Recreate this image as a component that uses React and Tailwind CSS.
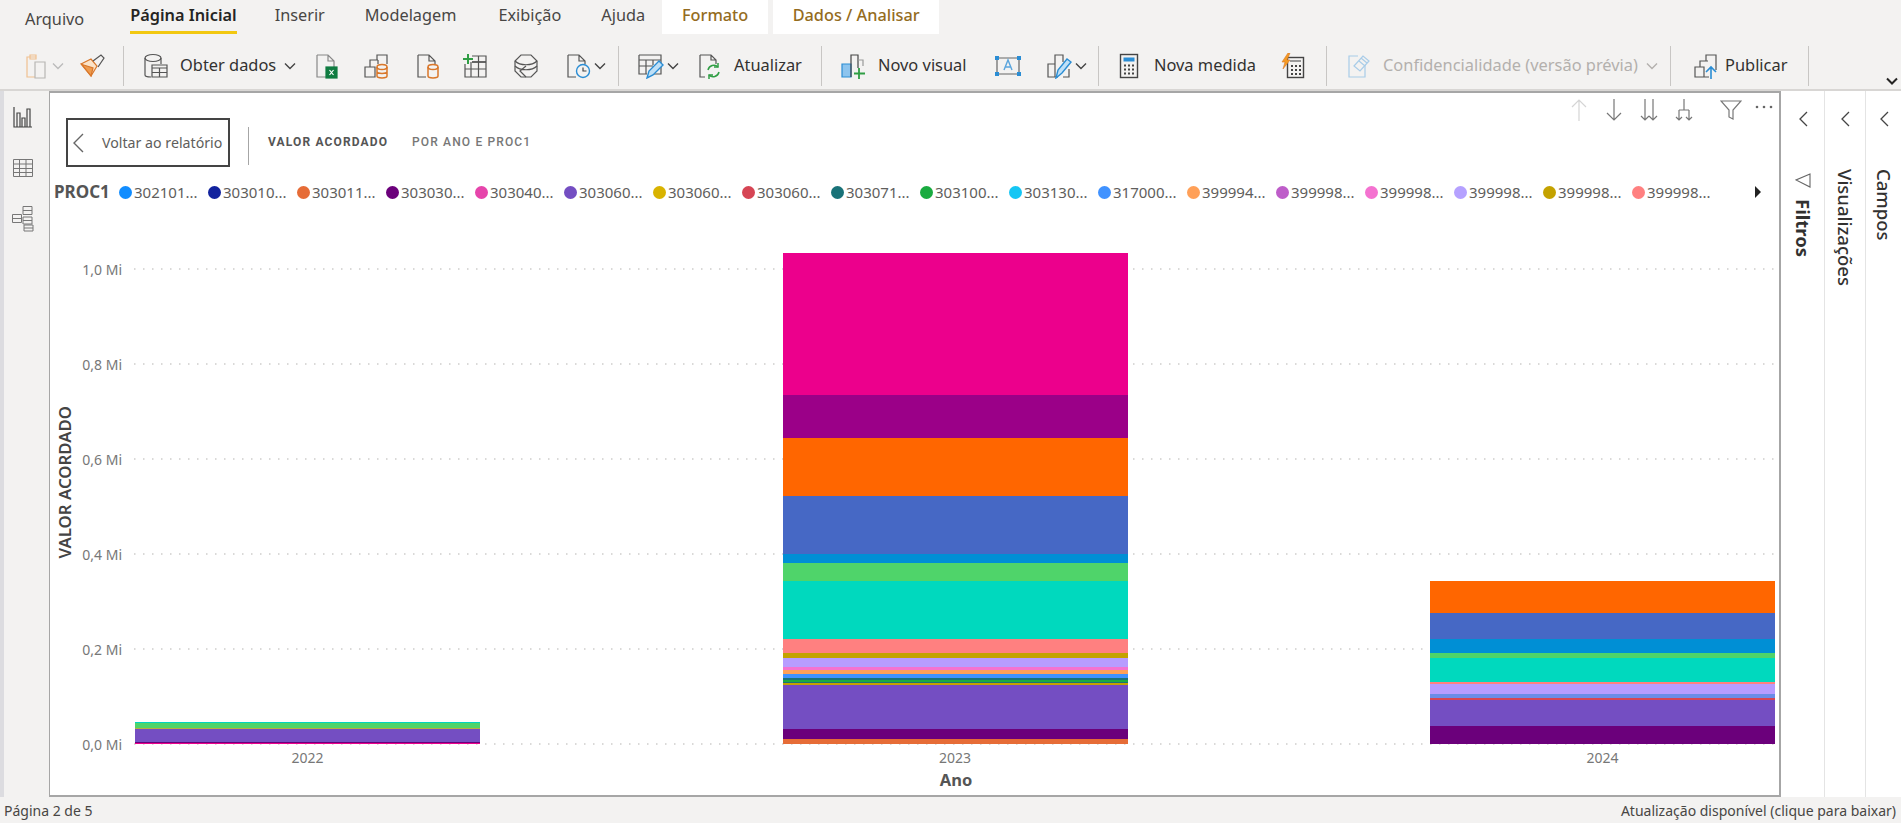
import React from 'react';

const tabs = [
  { label: 'Página Inicial', ml: 'ml-[46px]', cls: 'font-semibold text-[#252423]' },
  { label: 'Inserir', ml: 'ml-[38px]', cls: 'text-[#484644]' },
  { label: 'Modelagem', ml: 'ml-[40px]', cls: 'text-[#484644]' },
  { label: 'Exibição', ml: 'ml-[42px]', cls: 'text-[#484644]' },
  { label: 'Ajuda', ml: 'ml-[40px]', cls: 'text-[#484644]' },
];

const legend = [
  ['#118DFF', '302101...'], ['#12239E', '303010...'], ['#E66C37', '303011...'],
  ['#6B007B', '303030...'], ['#E645AB', '303040...'], ['#744EC2', '303060...'],
  ['#D9B300', '303060...'], ['#D64554', '303060...'], ['#197278', '303071...'],
  ['#1AAB40', '303100...'], ['#15C6F4', '303130...'], ['#4092FF', '317000...'],
  ['#FFA058', '399994...'], ['#BE5DC9', '399998...'], ['#F472D0', '399998...'],
  ['#B5A1FF', '399998...'], ['#C4A200', '399998...'], ['#FF8080', '399998...'],
];

// heights in px, top of the stack first
const bars = [
  {
    year: '2022',
    height: 22,
    parts: [[1, '#00D4C0'], [5, '#4FD46A'], [1, '#B5B040'], [13, '#744EC2'], [1, '#6B007B'], [1, '#EC008C']],
  },
  {
    year: '2023',
    height: 491,
    parts: [
      [142, '#EC008C'], [43, '#9B0088'], [58, '#FF6600'], [58, '#4668C5'], [9, '#008FD5'], [18, '#4FD46A'],
      [58, '#00D9BE'], [14, '#FF8080'], [5, '#C4A200'], [9, '#B79CFF'], [3, '#F472D0'], [4, '#FFA058'],
      [4, '#4092FF'], [2, '#197278'], [2, '#1AAB40'], [1, '#197278'], [2, '#C4A200'], [44, '#744EC2'],
      [10, '#6B007B'], [5, '#E66C37'],
    ],
  },
  {
    year: '2024',
    height: 163,
    parts: [
      [32, '#FF6600'], [26, '#4668C5'], [14, '#008FD5'], [5, '#4FD46A'], [24, '#00D9BE'], [2, '#FF8080'],
      [10, '#B79CFF'], [4, '#6B8CE8'], [2, '#D64554'], [26, '#744EC2'], [18, '#6B007B'],
    ],
  },
];

const yTicks = ['1,0 Mi', '0,8 Mi', '0,6 Mi', '0,4 Mi', '0,2 Mi', '0,0 Mi'];

const Chevron = ({ color = '#444' }) => (
  <svg width="12" height="8" viewBox="0 0 12 8" fill="none" stroke={color} strokeWidth="1.4">
    <path d="M1 1.5 6 6.5 11 1.5" />
  </svg>
);

const Icon = ({ children }) => (
  <svg width="26" height="26" viewBox="0 0 26 26" fill="none" stroke="#555" strokeWidth="1.2">
    {children}
  </svg>
);

const Sep = ({ ml }) => <div className={`h-[40px] w-px bg-[#c8c6c4] ${ml}`} />;

export default function App() {
  return (
    <div className="relative flex h-[823px] w-[1901px] flex-col overflow-hidden bg-[#f3f2f1] font-['Noto_Sans','Open_Sans',sans-serif]">
      <div className="flex h-[34px] shrink-0 items-stretch text-[16.3px] leading-none">
        <span className="ml-[25px] mt-[11px] text-[#484644]">Arquivo</span>
        {tabs.map((t) => (
          <div key={t.label} className={`${t.ml} ${t.cls} relative pt-[7px]`}>
            {t.label}
            {t.label === 'Página Inicial' && (
              <div className="absolute bottom-0 left-0 right-0 h-[3px] bg-[#f2c811]" />
            )}
          </div>
        ))}
        <div className="ml-[17px] flex w-[106px] justify-center bg-white pt-[7px] font-medium text-[#946c1e]">Formato</div>
        <div className="ml-[5px] flex w-[166px] justify-center bg-white pt-[7px] font-medium text-[#946c1e]">Dados / Analisar</div>
      </div>

      <div className="relative flex h-[57px] shrink-0 items-center border-b-2 border-[#d8d6d4] pt-[8px] text-[16.4px] text-[#323130]">
        {/* paste */}
        <div className="ml-[25px]">
          <Icon>
            <path d="M11 4H2v20h8" stroke="#f0c090" />
            <path d="M5 6V2h6v4z" stroke="#f0c090" />
            <path d="M10 9h10v16H10z" fill="#f3f2f1" stroke="#b8b6b4" />
          </Icon>
        </div>
        <div className="ml-[1px]"><Chevron color="#bbb" /></div>
        {/* format brush */}
        <div className="ml-[15px]">
          <Icon>
            <path d="M2 11 12 6l6 7-6 10z" fill="#fbe3c8" stroke="#d9772a" />
            <path d="M3 11.500 14 15 12 23z" fill="#ee9b4e" stroke="#d9772a" />
            <path d="M14 8l8-6 3 3-6 9" stroke="#555" />
          </Icon>
        </div>
        <Sep ml="ml-[18px]" />
        {/* get data */}
        <div className="ml-[19px]">
          <Icon>
            <ellipse cx="10" cy="5" rx="8" ry="3.500" />
            <path d="M2 5v17c0 1 2 2 6 2M18 5v6" />
            <path d="M9 12h15v12H9zM9 12h15v3H9z" />
            <path d="M9 19.500h15M16.500 15v9" />
          </Icon>
        </div>
        <span className="ml-[11px] w-[97px] whitespace-nowrap">Obter dados</span>
        <div className="ml-[7px]"><Chevron /></div>
        {/* excel */}
        <div className="ml-[18px]">
          <Icon>
            <path d="M3 2h11l6 6v6M14 2v6h6M3 2v22h9" stroke="#888" />
            <rect x="12" y="14" width="11" height="11" fill="#107c41" stroke="#107c41" />
            <path d="M15.500 17l4 5M19.500 17l-4 5" stroke="#fff" />
          </Icon>
        </div>
        {/* dataset */}
        <div className="ml-[24px]">
          <Icon>
            <path d="M1 14h10v10H1zM6 14V7h8M14 7v4M13 7V2h10v9" />
            <ellipse cx="18" cy="14" rx="5" ry="2.500" stroke="#d9772a" strokeWidth="1.500" />
            <path d="M13 14v9c0 2.500 10 2.500 10 0v-9M13 18.500c0 2.500 10 2.500 10 0" stroke="#d9772a" strokeWidth="1.500" />
          </Icon>
        </div>
        {/* sql */}
        <div className="ml-[25px]">
          <Icon>
            <path d="M3 2h11l6 6v3M14 2v6h6M3 2v22h8" />
            <ellipse cx="18" cy="14" rx="5" ry="2.500" stroke="#d9772a" strokeWidth="1.500" />
            <path d="M13 14v9c0 2.500 10 2.500 10 0v-9" stroke="#d9772a" strokeWidth="1.500" />
          </Icon>
        </div>
        {/* enter data */}
        <div className="ml-[21px]">
          <Icon>
            <path d="M10 3h14v21H3V11M3 16h21M9 9v15M16.500 3v21" />
            <path d="M10 9h14" strokeWidth="1.800" />
            <path d="M6 1v10M1 6h10" stroke="#2f9e44" strokeWidth="2" />
          </Icon>
        </div>
        {/* dataverse */}
        <div className="ml-[25px]">
          <Icon>
            <path d="M8 2h10l6 6v10l-6 6H8l-6-6V8z" />
            <path d="M2 8c5 5 17 5 22 0M2 13c5 5 17 5 22 0M13 13l-6 5 6 6" />
          </Icon>
        </div>
        {/* recent */}
        <div className="ml-[26px]">
          <Icon>
            <path d="M3 2h11l6 6v3M14 2v6h6M3 2v22h8" />
            <circle cx="18" cy="18" r="6.500" stroke="#2a8dd4" strokeWidth="1.400" fill="#f3f2f1" />
            <path d="M18 14.500V18h3.500" stroke="#444" />
          </Icon>
        </div>
        <div className="ml-[3px]"><Chevron /></div>
        <Sep ml="ml-[12px]" />
        {/* transform */}
        <div className="ml-[19px]">
          <Icon>
            <path d="M1 2h22v19H12M1 2v19h8M1 2v5h22M1 13h14M8 7v14M15 7v5" />
            <path d="M9 25l2-7 10-10 4 4-10 10z" stroke="#2a8dd4" fill="#bfe0f7" strokeWidth="1.400" />
          </Icon>
        </div>
        <div className="ml-[3px]"><Chevron /></div>
        {/* refresh */}
        <div className="ml-[17px]">
          <Icon>
            <path d="M4 2h11l5 5v4M15 2v5h5M4 2v22h5" />
            <path d="M12 17a6 6 0 0 1 10-3M23 19a6 6 0 0 1-10 3" stroke="#2f9e44" strokeWidth="1.500" />
            <path d="M22 10v4h-4M13 26v-4h4" stroke="#2f9e44" strokeWidth="1.500" />
          </Icon>
        </div>
        <span className="ml-[12px] w-[67px] whitespace-nowrap">Atualizar</span>
        <Sep ml="ml-[20px]" />
        {/* new visual */}
        <div className="ml-[19px]">
          <Icon>
            <path d="M1 11h9v13H1z" fill="#8cc4ee" stroke="#2a8dd4" />
            <path d="M10 24V2h7v13" stroke="#444" />
            <path d="M17 7h5v6" stroke="#999" />
            <path d="M18 15v11M13 20.500h11" stroke="#2f9e44" strokeWidth="1.800" />
          </Icon>
        </div>
        <span className="ml-[11px] w-[89px] whitespace-nowrap">Novo visual</span>
        {/* text box */}
        <div className="ml-[28px]">
          <Icon>
            <path d="M2 5h22v16H2z" stroke="#666" />
            <rect x="0" y="3" width="4" height="4" fill="#2a8dd4" stroke="none" />
            <rect x="22" y="3" width="4" height="4" fill="#2a8dd4" stroke="none" />
            <rect x="0" y="19" width="4" height="4" fill="#2a8dd4" stroke="none" />
            <rect x="22" y="19" width="4" height="4" fill="#2a8dd4" stroke="none" />
            <path d="M9 17l4-10 4 10M10.500 14h5" stroke="#5aa5dd" strokeWidth="1.400" />
          </Icon>
        </div>
        {/* more visuals */}
        <div className="ml-[25px]">
          <Icon>
            <path d="M2 11h7v13H2zM9 11V2h8v7M17 24h6v-8M9 24h3" />
            <path d="M10 25l2-8 9-11 4 3-9 11z" stroke="#2a8dd4" fill="#bfe0f7" strokeWidth="1.400" />
          </Icon>
        </div>
        <div className="ml-[3px]"><Chevron /></div>
        <Sep ml="ml-[11px]" />
        {/* measure */}
        <div className="ml-[17px]">
          <Icon>
            <rect x="4.500" y="1.500" width="17" height="23" stroke="#444" strokeWidth="1.400" />
            <path d="M7.500 4.500h11v4h-11z" fill="#2a8dd4" stroke="none" />
            <path d="M8 12.500h2M12 12.500h2M16 12.500h2M8 16.500h2M12 16.500h2M16 16.500h2M8 20.500h2M12 20.500h2M16 20.500h2" stroke="#444" strokeWidth="2" />
          </Icon>
        </div>
        <span className="ml-[12px] w-[102px] whitespace-nowrap">Nova medida</span>
        {/* quick measure */}
        <div className="ml-[24px]">
          <Icon>
            <rect x="7.500" y="4.500" width="16" height="20" stroke="#444" strokeWidth="1.400" />
            <path d="M10 8h11" stroke="#999" strokeWidth="2" />
            <path d="M11 13h2M15 13h2M19 13h2M11 17h2M15 17h2M19 17h2M11 21h2M15 21h2M19 21h2" stroke="#444" strokeWidth="2" />
            <path d="M8 0 2 9h3L3 16l7-9H7l3-7z" fill="#f59b23" stroke="#d9772a" strokeWidth=".6" />
          </Icon>
        </div>
        <Sep ml="ml-[20px]" />
        {/* sensitivity */}
        <div className="ml-[19px]">
          <Icon>
            <path d="M12 3H3v21h16V12" stroke="#a8cce8" />
            <path d="M8 13l9-10 6 5-9 10zM15 5l6 5M13 8l6 5" stroke="#a8cce8" />
          </Icon>
        </div>
        <span className="ml-[11px] w-[257px] whitespace-nowrap text-[#b3b0ad]">Confidencialidade (versão prévia)</span>
        <div className="ml-[6px]"><Chevron color="#b3b0ad" /></div>
        <Sep ml="ml-[12px]" />
        {/* publish */}
        <div className="ml-[22px]">
          <Icon>
            <path d="M2 14h9v10H2zM7 14V8h8M13 8V2h10v15M11 24h5" />
            <path d="M18 26V14M13 19l5-5 5 5" stroke="#2a8dd4" strokeWidth="1.600" />
          </Icon>
        </div>
        <span className="ml-[6px] w-[67px] whitespace-nowrap">Publicar</span>
        <Sep ml="ml-[16px]" />
        <div className="absolute bottom-[4px] right-[3px]">
          <svg width="12" height="8" viewBox="0 0 12 8" fill="none" stroke="#252423" strokeWidth="2">
            <path d="M1 1.500 6 6.500 11 1.500" />
          </svg>
        </div>
      </div>

      <div className="flex min-h-0 flex-1">
        <div className="flex w-[49px] shrink-0 flex-col items-center border-l-[4px] border-[#dcdce0] pr-[7px] pt-[14px] text-[#605e5c]">
          <svg width="22" height="24" viewBox="0 0 22 24" fill="none" stroke="#444" strokeWidth="1.2">
            <path d="M2 2v20h18M5 8h3v14H5zM10 13h3v9h-3zM15 4h3v18h-3z" />
          </svg>
          <svg className="mt-[28px]" width="22" height="22" viewBox="0 0 22 22" fill="none" stroke="#777" strokeWidth="1">
            <path d="M1.500 2.500h19v17h-19zM1.500 7h19M1.500 11.500h19M1.500 15.500h19M7.500 2.500v17M14 2.500v17" />
          </svg>
          <svg className="mt-[25px]" width="24" height="28" viewBox="0 0 24 28" fill="none" stroke="#777" strokeWidth="1">
            <path d="M1.500 10.500h9v8h-9zM12 2.500h9v8h-9zM12 13h9v7h-9zM13 21h9v6h-9zM1.500 14.500h9M12 6.500h9M12 16.500h9M13 24h9" />
          </svg>
        </div>

        <div className="relative flex h-[706px] w-[1732px] shrink-0 flex-col border-2 border-l-[1px] border-[#a6a6a6] bg-white">
          {/* visual header floats over the canvas */}
          <div className="absolute right-[6px] top-[5px] flex items-center">
            <svg width="20" height="24" viewBox="0 0 20 24" fill="none" stroke="#d5d5d5" strokeWidth="1.2"><path d="M10 23V2M3 9l7-7 7 7" /></svg>
            <svg className="ml-[15px]" width="20" height="24" viewBox="0 0 20 24" fill="none" stroke="#777" strokeWidth="1.2"><path d="M10 1v21M3 15l7 7 7-7" /></svg>
            <svg className="ml-[15px]" width="20" height="24" viewBox="0 0 20 24" fill="none" stroke="#777" strokeWidth="1.2"><path d="M6 1v21M14 1v21M2 18l4 4 4-4M10 18l4 4 4-4" /></svg>
            <svg className="ml-[15px]" width="20" height="24" viewBox="0 0 20 24" fill="none" stroke="#777" strokeWidth="1.2"><path d="M10 1v11M5 12h10M5 12v10M15 12v10M2 19l3 3 3-3M12 19l3 3 3-3" /></svg>
            <svg className="ml-[26px]" width="22" height="22" viewBox="0 0 22 22" fill="none" stroke="#777" strokeWidth="1.2"><path d="M1 2h20l-8 9v9l-4-2v-7z" /></svg>
            <svg className="ml-[13px] mb-[6px]" width="18" height="4" viewBox="0 0 18 4" fill="#666"><circle cx="2" cy="2" r="1.300" /><circle cx="9" cy="2" r="1.300" /><circle cx="16" cy="2" r="1.300" /></svg>
          </div>

          <div className="flex h-[74px] shrink-0 items-end pl-[16px]">
            <div className="flex h-[49px] w-[164px] items-center border-2 border-[#444] text-[14.2px] text-[#605e5c]">
              <svg className="ml-[3px]" width="14" height="22" viewBox="0 0 14 22" fill="none" stroke="#666" strokeWidth="1.4"><path d="M12 2 3 11l9 9" /></svg>
              <span className="ml-[17px] whitespace-nowrap">Voltar ao relatório</span>
            </div>
            <div className="mb-[2px] ml-[18px] h-[38px] w-px bg-[#a6a6a6]" />
            <div className="mb-[16px] ml-[19px] flex font-['Roboto',sans-serif] text-[12px] tracking-[1.15px]">
              <span className="w-[144px] font-bold text-[#555]">VALOR ACORDADO</span>
              <span className="font-medium text-[#777]">POR ANO E PROC1</span>
            </div>
          </div>

          <div className="mt-[12px] flex h-[26px] shrink-0 items-center pl-[4px] text-[15px] text-[#605e5c]">
            <span className="w-[65px] text-[17px] font-bold text-[#555]">PROC1</span>
            <div className="flex">
              {legend.map(([color, label], i) => (
                <div key={i} className="flex w-[89px] items-center">
                  <span className="h-[13px] w-[13px] shrink-0 rounded-full" style={{ backgroundColor: color }} />
                  <span className="ml-[2px] whitespace-nowrap">{label}</span>
                </div>
              ))}
            </div>
            <svg className="ml-[33px]" width="8" height="14" viewBox="0 0 8 14" fill="#222"><path d="M1 1l6 6-6 6z" /></svg>
          </div>

          <div className="flex h-[539px] shrink-0">
            <div className="flex w-[27px] shrink-0 items-center justify-end pt-[16px]">
              <span className="rotate-180 whitespace-nowrap text-[16.8px] font-semibold text-[#444] [writing-mode:vertical-rl]">VALOR ACORDADO</span>
            </div>
            <div className="ml-[5px] flex w-[40px] shrink-0 flex-col justify-between pt-[64px] text-[14px] text-[#777]">
              {yTicks.map((t) => (
                <div key={t} className="flex h-0 items-center justify-end whitespace-nowrap">{t}</div>
              ))}
            </div>
            <div className="relative ml-[12px] mt-[64px] flex h-[475px] w-[1641px] shrink-0 items-end justify-between pl-[1px]">
              <div className="absolute inset-0 flex flex-col justify-between">
                {yTicks.map((t) => (
                  <div key={t} className="h-0 w-full">
                    <svg className="-mt-[1px] h-[2px] w-full">
                      <line x1="0" x2="100%" y1="1" y2="1" stroke="#b5b3b1" strokeWidth="1.2" strokeDasharray="1.5 7.5" />
                    </svg>
                  </div>
                ))}
              </div>
              {bars.map((b) => (
                <div key={b.year} className="relative flex w-[345px] flex-col" style={{ height: b.height }}>
                  {b.parts.map(([h, color], i) => (
                    <div key={i} className="shrink-0" style={{ height: h, backgroundColor: color }} />
                  ))}
                </div>
              ))}
            </div>
          </div>

          <div className="mt-[5px] flex w-[1725px] justify-between pl-[85px] text-[14px] leading-[18px] text-[#777]">
            {bars.map((b) => (
              <div key={b.year} className="w-[345px] text-center">{b.year}</div>
            ))}
          </div>
          <div className="mt-[3px] w-[1812px] text-center text-[16.5px] font-bold leading-[20px] text-[#555]">Ano</div>
        </div>

        <div className="flex h-[706px] flex-1">
          <div className="flex w-[43px] flex-col items-center bg-white pt-[18px]">
            <svg width="12" height="20" viewBox="0 0 12 20" fill="none" stroke="#444" strokeWidth="1.3"><path d="M10 3 3 10l7 7" /></svg>
            <svg className="mt-[43px]" width="16" height="18" viewBox="0 0 16 18" fill="none" stroke="#666" strokeWidth="1.1"><path d="M15 2 1 8l14 7z" /></svg>
            <span className="mt-[9px] text-[18.5px] font-bold leading-none text-[#323130] [writing-mode:vertical-rl]">Filtros</span>
          </div>
          <div className="flex w-[41px] flex-col items-center border-l border-[#e4e4e4] bg-white pr-[1px] pt-[18px]">
            <svg width="12" height="20" viewBox="0 0 12 20" fill="none" stroke="#444" strokeWidth="1.3"><path d="M10 3 3 10l7 7" /></svg>
            <span className="mt-[40px] text-[18.5px] font-medium leading-none text-[#323130] [writing-mode:vertical-rl]">Visualizações</span>
          </div>
          <div className="flex w-[36px] flex-col items-center border-l border-[#e4e4e4] bg-white pl-[1px] pt-[18px]">
            <svg width="12" height="20" viewBox="0 0 12 20" fill="none" stroke="#444" strokeWidth="1.3"><path d="M10 3 3 10l7 7" /></svg>
            <span className="mt-[40px] text-[18.5px] font-medium leading-none text-[#323130] [writing-mode:vertical-rl]">Campos</span>
          </div>
        </div>
      </div>

      <div className="flex h-[26px] shrink-0 items-center justify-between pl-[4px] pr-[5px] text-[14px] text-[#484644]">
        <span>Página 2 de 5</span>
        <span>Atualização disponível (clique para baixar)</span>
      </div>
    </div>
  );
}
